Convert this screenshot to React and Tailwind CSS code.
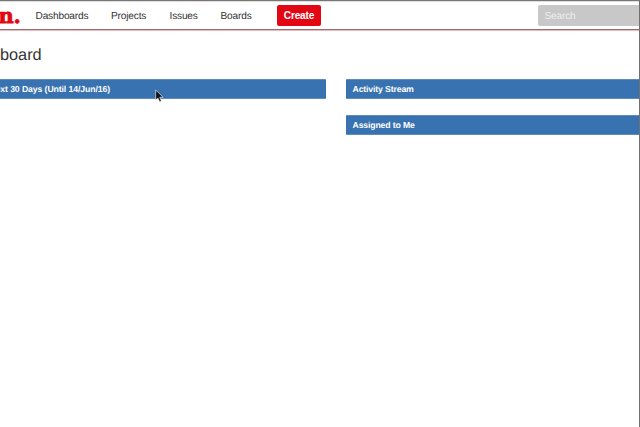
const links = [
  { label: 'Dashboards', box: 'ml-[15px] w-[75.5px]' },
  { label: 'Projects', box: 'w-[58.5px]' },
  { label: 'Issues', box: 'w-[51px]' },
  { label: 'Boards', box: 'w-[56.5px]' },
];

function Gadget({ children }) {
  return (
    <section className="flex h-[20px] items-center overflow-hidden rounded-l-[1px] border-y border-[#5c8cba] bg-[#3872b0] pt-px pl-[6.5px] text-[8.7px] tracking-[-0.14px] font-bold whitespace-nowrap text-white">
      {children}
    </section>
  );
}

function Pointer() {
  return (
    <svg className="absolute top-[88px] left-[155px] h-[14px] w-[9px]" viewBox="0 0 9 14">
      <path d="M.7 1v10l2.2-2 1.7 3.7 1.8-.8-1.7-3.6h3.4z" fill="#111" stroke="#fff" strokeWidth=".6" />
    </svg>
  );
}

export default function App() {
  return (
    <div className="relative flex h-[427px] w-[640px] flex-col overflow-hidden border-t border-r border-t-[#777] border-r-[#707070] bg-white font-['Liberation_Sans',Arial,sans-serif] text-[#333] [text-rendering:geometricPrecision]">
      <header className="flex h-[29px] shrink-0 items-center border-t border-b border-t-[#dedede] border-b-[#8f7072] text-[10.1px] tracking-[-0.16px] shadow-[0_1px_0_#f2b8bb]">
        <div className="flex h-[27px] w-[20.5px] shrink-0 justify-end overflow-hidden font-['DejaVu_Serif',serif] text-[21px] leading-[27px] font-black tracking-[-0.3px] text-[#e30613] [-webkit-text-stroke:0.8px_#e30613]">
          n.
        </div>
        <nav className="flex pt-[2px]">
          {links.map(({ label, box }) => (
            <a key={label} className={box}>{label}</a>
          ))}
        </nav>
        <button className="flex h-[21px] w-[44px] items-center justify-center rounded-[2px] bg-[#e30613] font-bold text-white">
          Create
        </button>
        <div className="ml-auto flex h-[21px] w-[101.5px] items-center rounded-l-[2px] bg-[#c8c8c8] pt-[2px] pl-[7px] text-[#eee]">
          Search
        </div>
      </header>
      <h1 className="mt-[14px] h-[20px] text-[16.3px] leading-[22px]">board</h1>
      <main className="mt-[15px] flex gap-[20px]">
        <div className="w-[326px]">
          <div className="flex h-[20px] items-center overflow-hidden rounded-r-[1px] border-y border-[#5c8cba] bg-[#3872b0] pt-px text-[8.7px] tracking-[-0.1px] font-bold whitespace-nowrap text-white">
            <span className="flex w-[110px] justify-end">Next 30 Days (Until 14/Jun/16)</span>
          </div>
        </div>
        <div className="flex flex-1 flex-col gap-[16px]">
          <Gadget>Activity Stream</Gadget>
          <Gadget>Assigned to Me</Gadget>
        </div>
      </main>
      <Pointer />
    </div>
  );
}
